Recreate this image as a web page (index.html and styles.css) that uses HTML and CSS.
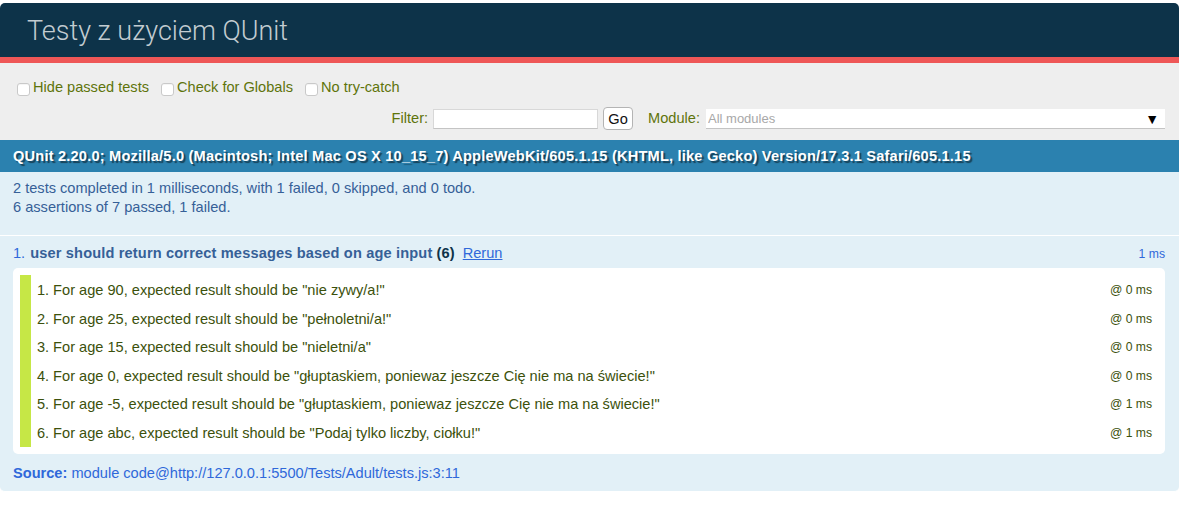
FILE: index.html
```html
<!DOCTYPE html>
<html lang="pl">
<head>
<meta charset="utf-8">
<title>Testy z użyciem QUnit</title>
<link rel="stylesheet" href="styles.css">
</head>
<body>
<div class="qunit">
  <h1 class="qunit-header">Testy z użyciem QUnit</h1>
  <div class="qunit-banner"></div>
  <div class="toolbar">
    <div class="url-config">
      <label class="opt"><input type="checkbox">Hide passed tests</label>
      <label class="opt"><input type="checkbox">Check for Globals</label>
      <label class="opt"><input type="checkbox">No try-catch</label>
    </div>
    <form class="filters">
      <label class="filter-label" for="f">Filter:</label>
      <input id="f" class="filter-input" type="text">
      <button class="go" type="button">Go</button>
      <label class="module-label" for="m">Module:</label>
      <div class="module-search">
        <input id="m" class="module-input" type="text" placeholder="All modules">
      </div>
    </form>
  </div>
  <h2 class="user-agent">QUnit 2.20.0; Mozilla/5.0 (Macintosh; Intel Mac OS X 10_15_7) AppleWebKit/605.1.15 (KHTML, like Gecko) Version/17.3.1 Safari/605.1.15</h2>
  <div class="testresult">
    <div>2 tests completed in 1 milliseconds, with 1 failed, 0 skipped, and 0 todo.</div>
    <div><span>6</span> assertions of <span>7</span> passed, <span>1</span> failed.</div>
  </div>
  <ol class="tests">
    <li class="test pass">
      <div class="test-head">
        <span class="num">1.</span>
        <strong class="test-name">user should return correct messages based on age input</strong>
        <b class="counts">(6)</b>
        <a class="rerun" href="#">Rerun</a>
        <span class="runtime">1 ms</span>
      </div>
      <ol class="assert-list">
        <li class="assert"><span>1. For age 90, expected result should be "nie zywy/a!"</span><span class="a-time">@ 0 ms</span></li>
        <li class="assert"><span>2. For age 25, expected result should be "pełnoletni/a!"</span><span class="a-time">@ 0 ms</span></li>
        <li class="assert"><span>3. For age 15, expected result should be "nieletni/a"</span><span class="a-time">@ 0 ms</span></li>
        <li class="assert"><span>4. For age 0, expected result should be "głuptaskiem, poniewaz jeszcze Cię nie ma na świecie!"</span><span class="a-time">@ 0 ms</span></li>
        <li class="assert"><span>5. For age -5, expected result should be "głuptaskiem, poniewaz jeszcze Cię nie ma na świecie!"</span><span class="a-time">@ 1 ms</span></li>
        <li class="assert"><span>6. For age abc, expected result should be "Podaj tylko liczby, ciołku!"</span><span class="a-time">@ 1 ms</span></li>
      </ol>
      <p class="source"><strong>Source:</strong> module code@http://127.0.0.1:5500/Tests/Adult/tests.js:3:11</p>
    </li>
  </ol>
</div>
</body>
</html>
```

FILE: styles.css
```css
html, body {
  background: #fff;
}
body {
  margin: 3px 3px 0 0;
  font-family: "Liberation Sans", Arial, Helvetica, sans-serif;
  font-size: 14.6px;
  line-height: 17.4px;
}

.qunit-header {
  margin: 0;
  padding: 15px 0 12px 27px;
  font-family: Roboto, "Liberation Sans", Arial, sans-serif;
  font-weight: 300;
  font-size: 27px;
  line-height: 27px;
  color: #C2CCD1;
  background-color: #0D3349;
  border-radius: 5px 5px 0 0;
}

.qunit-banner {
  height: 6px;
  background-color: #EE5757;
}

.toolbar {
  padding: 7.5px 14px;
  color: #5E740B;
  background-color: #EEE;
}

.url-config {
  display: flex;
  align-items: center;
  height: 31px;
  box-sizing: border-box;
  padding-top: 3px;
}

.opt {
  display: flex;
  align-items: center;
  margin-right: 9px;
}

.opt input {
  appearance: none;
  -webkit-appearance: none;
  width: 13px;
  height: 13px;
  margin: 4px 3px 0 3px;
  border: 1px solid #c9c9c9;
  border-radius: 3px;
  background: #fff;
  box-shadow: inset 0 1px 0 rgba(0,0,0,0.04);
}

.filters {
  margin: 0;
  display: flex;
  justify-content: flex-end;
  align-items: center;
  height: 31px;
  box-sizing: border-box;
  padding-top: 3px;
}

.filter-label {
  margin-right: 5px;
}

.filter-input {
  width: 165px;
  height: 20px;
  box-sizing: border-box;
  margin: 0;
  border: 1px solid #d8d8d8;
  border-bottom-color: #c4c4c4;
  background: #fff;
  font: 13px "Liberation Sans", Arial, sans-serif;
}

.go {
  margin: 0 15px 0 5px;
  width: 30px;
  height: 23px;
  padding: 0;
  border: 1px solid #b4b4b4;
  border-radius: 4px;
  background: #fff;
  color: #111;
  font: 14.6px "Liberation Sans", Arial, sans-serif;
}

.module-label {
  margin-right: 6px;
}

.module-search {
  position: relative;
  width: 459px;
}

.module-search::after {
  content: "\25BC";
  position: absolute;
  right: 6px;
  top: 1px;
  font-size: 14px;
  line-height: 18px;
  color: #000;
}

.module-input {
  display: block;
  width: 100%;
  height: 20px;
  box-sizing: border-box;
  margin: 0;
  padding: 0 2px;
  border: none;
  border-bottom: 1px solid #c4c4c4;
  background: #fff;
  font: 13px "Liberation Sans", Arial, sans-serif;
}

.module-input::placeholder {
  color: #a8a8a8;
}

.user-agent {
  margin: 0;
  height: 32px;
  box-sizing: border-box;
  padding: 8.3px 13px 6.3px;
  font-size: 14.6px;
  line-height: 17.4px;
  font-weight: bold;
  letter-spacing: 0.2px;
  color: #FFF;
  background-color: #2B81AF;
  text-shadow: rgba(0, 0, 0, 0.5) 2px 2px 1px;
  white-space: nowrap;
}

.testresult {
  height: 64px;
  box-sizing: border-box;
  padding: 7.3px 13px;
  line-height: 19px;
  color: #366097;
  background-color: #E2F0F7;
  border-bottom: 1px solid #FFF;
}

.tests {
  margin: 0;
  padding: 0;
  list-style: none;
}

.test {
  padding: 5.8px 14px 5.8px 13px;
  color: #2F68DA;
  background-color: #E2F0F7;
  border-bottom: 1px solid #FFF;
  border-radius: 0 0 5px 5px;
}

.test-head {
  display: flex;
  align-items: baseline;
  height: 19px;
  line-height: 19px;
  padding-top: 2px;
  box-sizing: border-box;
}

.num {
  margin-right: 5px;
}

.test-name {
  color: #366097;
  margin-right: 4px;
  letter-spacing: 0.15px;
}

.counts {
  color: #0D3349;
  letter-spacing: 0.15px;
}

.rerun {
  margin-left: 8px;
  color: #2F68DA;
  text-decoration: underline;
}

.runtime {
  margin-left: auto;
  font-size: 12.2px;
}

.assert-list {
  margin: 7.3px 0 0 0;
  padding: 7.3px;
  list-style: none;
  background-color: #FFF;
  border-radius: 5px;
}

.assert {
  display: flex;
  justify-content: space-between;
  align-items: center;
  height: 28.6px;
  box-sizing: border-box;
  padding: 6.6px 5.6px 4.6px;
  line-height: 17.4px;
  color: #3C510C;
  background-color: #FFF;
  border-left: 11px solid #C6E746;
}

.a-time {
  font-size: 12.2px;
}

.source {
  margin: 10.3px 0 2.9px;
  color: #2F68DA;
}

.source strong {
  color: #2F68DA;
}
```
